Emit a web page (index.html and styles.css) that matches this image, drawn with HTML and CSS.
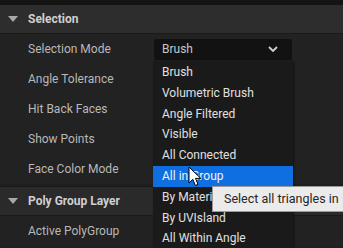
FILE: index.html
```html
<!DOCTYPE html>
<html lang="en">
<head>
    <meta charset="UTF-8">
    <title>Details Panel</title>
    <link rel="stylesheet" href="styles.css">
</head>
<body>
    <div class="panel">
        <div class="topbar"></div>

        <div class="section-head">
            <span class="caret"></span>
            <span>Selection</span>
        </div>
        <div class="row">
            <span class="label">Selection Mode</span>
            <div class="combo">
                <span>Brush</span>
                <svg class="chevron" width="10" height="6" viewBox="0 0 10 6">
                    <path d="M1 1 L5 5 L9 1" fill="none" stroke="#d0d0d0" stroke-width="1.8"/>
                </svg>
            </div>
        </div>
        <div class="row"><span class="label">Angle Tolerance</span></div>
        <div class="row"><span class="label">Hit Back Faces</span></div>
        <div class="row"><span class="label">Show Points</span></div>
        <div class="row"><span class="label">Face Color Mode</span></div>

        <div class="section-head second">
            <span class="caret"></span>
            <span>Poly Group Layer</span>
        </div>
        <div class="row"><span class="label">Active PolyGroup</span></div>
    </div>

    <ul class="menu">
        <li>Brush</li>
        <li>Volumetric Brush</li>
        <li>Angle Filtered</li>
        <li>Visible</li>
        <li>All Connected</li>
        <li class="active">All in Group</li>
        <li>By Material</li>
        <li>By UVIsland</li>
        <li>All Within Angle</li>
    </ul>

    <div class="tooltip">Select all triangles in</div>

    <svg class="cursor" width="14" height="21" viewBox="0 0 14 21">
        <path d="M1 1 L1 17 L4.8 13.3 L7.4 19.5 L10 18.4 L7.5 12.4 L12.8 12.4 Z" fill="#ffffff" stroke="#000000" stroke-width="1"/>
    </svg>
</body>
</html>
```

FILE: styles.css
```css
* {
    margin: 0;
    padding: 0;
    box-sizing: border-box;
}

body {
    font-family: Roboto, 'Liberation Sans', sans-serif;
    font-size: 12px;
    color: #bdbdbd;
    background-color: #1f1f1f;
    width: 343px;
    height: 248px;
    overflow: hidden;
    position: relative;
}

.topbar {
    height: 5px;
    background-color: #141414;
}

.section-head {
    display: flex;
    align-items: center;
    gap: 8px;
    height: 29px;
    padding-left: 8px;
    background-color: #2d2d2d;
    border-bottom: 1px solid #1a1a1a;
    color: #cfcfcf;
    font-weight: 700;
}

.section-head.second {
    height: 30px;
    margin-top: 2px;
    border-top: 1px solid #1a1a1a;
    background-color: #2a2a2a;
}

.caret {
    width: 0;
    height: 0;
    border-left: 5px solid transparent;
    border-right: 5px solid transparent;
    border-top: 6px solid #a8a8a8;
    margin-right: 2px;
}

.row {
    display: flex;
    align-items: center;
    height: 30px;
    background-color: #222222;
}

.label {
    width: 154px;
    padding-left: 28px;
    color: #b8b8b8;
}

.combo {
    display: flex;
    align-items: center;
    justify-content: space-between;
    width: 138px;
    height: 21px;
    padding: 0 14px 0 8px;
    background-color: #121212;
    border-radius: 2px;
    color: #c8c8c8;
}

.menu {
    position: absolute;
    left: 153px;
    top: 61px;
    width: 140px;
    height: 190px;
    padding-top: 1px;
    list-style: none;
    background-color: #1a1a1a;
    box-shadow: 1px 0 2px rgba(0, 0, 0, 0.5);
}

.menu li {
    height: 20.8px;
    line-height: 20.8px;
    padding-left: 9px;
    color: #e0e0e0;
    white-space: nowrap;
}

.menu li.active {
    background-color: #0f6fe0;
    color: #f2f2f2;
}

.tooltip {
    position: absolute;
    left: 212px;
    top: 186px;
    width: 140px;
    height: 26px;
    line-height: 24px;
    padding-left: 11px;
    background-color: #ebebeb;
    border: 1px solid #9a9a9a;
    color: #262626;
    font-size: 12.5px;
    white-space: nowrap;
}

.cursor {
    position: absolute;
    left: 188px;
    top: 166px;
}
```
